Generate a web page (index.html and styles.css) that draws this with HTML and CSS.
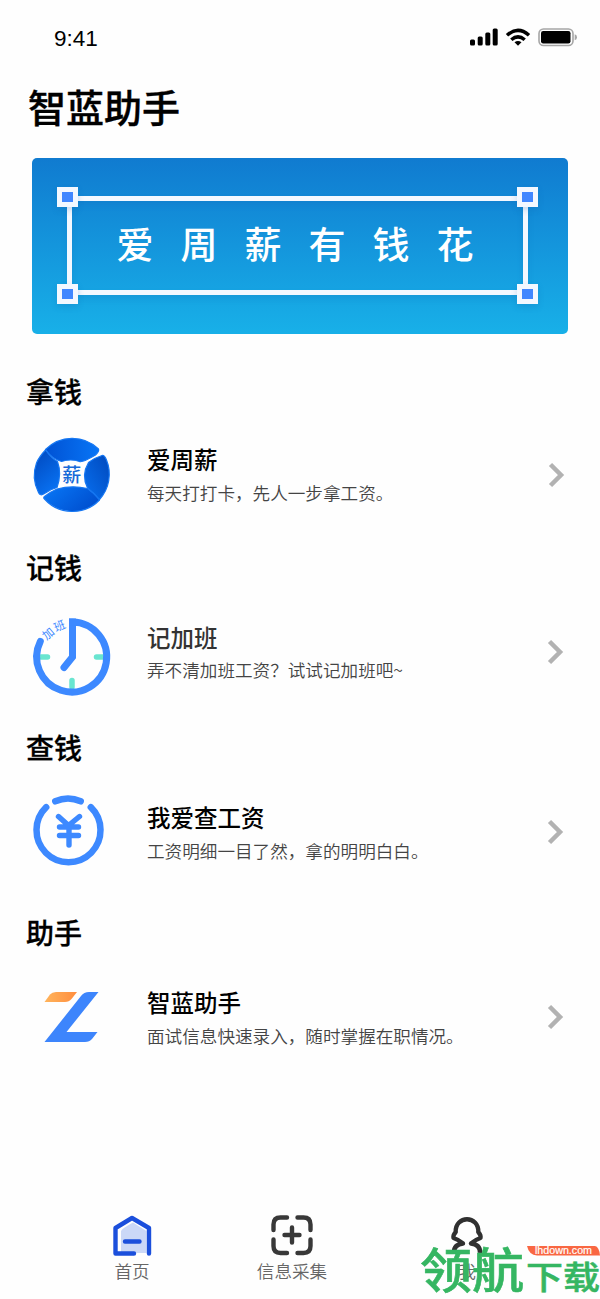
FILE: index.html
```html
<!DOCTYPE html>
<html lang="zh-CN">
<head>
<meta charset="utf-8">
<title>智蓝助手</title>
<link rel="stylesheet" href="styles.css">
</head>
<body>
<div class="screen">
  <header class="status">
    <span class="time">9:41</span>
    <svg class="status-icons" width="108" height="20" viewBox="0 0 108 20">
      <rect x="0" y="11.5" width="5" height="6" rx="1.5"/><rect x="7.7" y="8.5" width="5" height="9" rx="1.5"/><rect x="15.3" y="4.5" width="5" height="13" rx="1.5"/><rect x="22.7" y="0.5" width="5" height="17" rx="1.5"/>
      <g fill="none" stroke="#000" stroke-width="3.5"><path d="M37 7.2Q48-2.6 59 7.2M41.3 11.8Q48 6 54.7 11.8"/></g>
      <path d="M44.5 14.3Q48 11.5 51.5 14.3L48 17.8Z"/>
      <rect x="69" y="1" width="34" height="16.5" rx="4.5" fill="none" stroke="#a6a6a6" stroke-width="1.6"/>
      <rect x="71" y="3" width="29.5" height="12.5" rx="2.2"/>
      <path d="M104.7 6.3Q107 7 107 9.3T104.7 12.3Z" fill="#a6a6a6"/>
    </svg>
  </header>
  <h1 class="title">智蓝助手</h1>
  <div class="banner">
    <div class="frame">
      <span class="slogan">爱周薪有钱花</span>
      <i class="handle tl"></i><i class="handle tr"></i><i class="handle bl"></i><i class="handle br"></i>
    </div>
  </div>
  <main>
    <section class="group group-pay">
      <h2>拿钱</h2>
      <div class="item">
        <svg class="logo" width="90" height="90" viewBox="0 0 90 90">
          <defs>
            <linearGradient id="a" x1="0" y1="0" x2="1" y2="0"><stop offset="0" stop-color="#0052d4"/><stop offset="1" stop-color="#0875f6"/></linearGradient>
            <linearGradient id="b" x1="1" y1="0" x2="0" y2="1"><stop offset="0" stop-color="#0049bd"/><stop offset="1" stop-color="#0870f0"/></linearGradient>
            <linearGradient id="c" x1="0" y1="0" x2="1" y2=".5"><stop offset="0" stop-color="#0878f8"/><stop offset="1" stop-color="#0050d0"/></linearGradient>
            <linearGradient id="d" x1="0" y1="0" x2=".5" y2="1"><stop offset="0" stop-color="#0047bd"/><stop offset="1" stop-color="#0870f0"/></linearGradient>
          </defs>
          <g stroke="#1677f2" stroke-width="1.2" stroke-linejoin="round">
            <path d="M19.5 20Q13 27 10.500 33A37 37 0 0 0 12.500 62.500Q14 66.500 18.500 63.500Q25 59 31 57.500Q36 44 31.500 31.500Q26 29 19.500 20Z" fill="url(#d)"/>
            <path d="M19.500 19.500A37.500 37.500 0 0 1 72.500 19Q73.500 21.500 69.500 25Q56 33 53.500 31.500Q45 28.500 35.500 31.500Q26 29 19.500 19.500Z" fill="url(#a)"/>
            <path d="M76 25.500Q78.500 25 80.500 30A37.500 37.500 0 0 1 73.500 69.500Q68 63 61.500 58Q55 45 62.500 32.500Q68 28 76 25.500Z" fill="url(#b)"/>
            <path d="M18.500 69A37.500 37.500 0 0 0 73.500 70Q68 63 61.500 58.500Q46 55 31 59Q24 62 18.500 66.500Q17 67.500 18.500 69Z" fill="url(#c)"/>
          </g>
          <text x="45.700" y="52" text-anchor="middle" font-size="19" font-weight="500" fill="#1769d8">薪</text>
        </svg>
        <div class="copy"><h3>爱周薪</h3><p>每天打打卡，先人一步拿工资。</p></div>
        <svg class="chevron" width="18" height="28" viewBox="0 0 18 28"><path d="M3.500 3.500 14 14 3.500 24.500"/></svg>
      </div>
    </section>
    <section class="group group-hours">
      <h2>记钱</h2>
      <div class="item">
        <svg class="logo" width="90" height="90" viewBox="-1 -1 90 90">
          <g fill="none" stroke="#69e5d0" stroke-width="5.500"><path d="M14 45h6.500M76 45h-6.500M45 75v-6.500" stroke-linecap="round"/></g>
          <path d="M13.300 29.500A35 35 0 1 0 45.500 10V45L37 55.500" fill="none" stroke="#3d89ff" stroke-width="7" stroke-linecap="round" stroke-linejoin="miter"/>
          <path d="M42 6.500h7v7h-7z" fill="#3d89ff"/>
          <g fill="#3d89ff" font-size="11.500"><text transform="translate(19.500 28.500) rotate(-40)">加</text><text transform="translate(29 20) rotate(-24)">班</text></g>
        </svg>
        <div class="copy"><h3>记加班</h3><p>弄不清加班工资？试试记加班吧~</p></div>
        <svg class="chevron" width="18" height="28" viewBox="0 0 18 28"><path d="M3.500 3.500 14 14 3.500 24.500"/></svg>
      </div>
    </section>
    <section class="group group-salary">
      <h2>查钱</h2>
      <div class="item">
        <svg class="logo" width="90" height="90" viewBox="0 0 90 90">
          <g fill="none" stroke="#3d89ff" stroke-width="6.500" stroke-linecap="round" stroke-linejoin="round">
            <path d="M20.200 22.200A32 32 0 1 0 64.800 22.200M29.300 16.300Q42 10.500 54.700 16.300"/>
            <path stroke-width="5.400" d="M32.500 31.500 42.500 40.500 53.500 31.500M33.500 42h19M33.500 50.500h19M43 42v18"/>
          </g>
        </svg>
        <div class="copy"><h3>我爱查工资</h3><p>工资明细一目了然，拿的明明白白。</p></div>
        <svg class="chevron" width="18" height="28" viewBox="0 0 18 28"><path d="M3.500 3.500 14 14 3.500 24.500"/></svg>
      </div>
    </section>
    <section class="group group-helper">
      <h2>助手</h2>
      <div class="item">
        <svg class="logo" width="90" height="90" viewBox="0 0 90 90">
          <defs><linearGradient id="o"><stop offset="0" stop-color="#ffb45c"/><stop offset="1" stop-color="#ff8d3e"/></linearGradient></defs>
          <path d="M18.500 30 24 22.500Q26 20 30 20H51L45.500 27Q43 30 39 30Z" fill="url(#o)"/>
          <path d="M18.500 70 55 24Q58 20 63 20H72.500L40.500 60H71.500L66 67Q63.500 70 59 70Z" fill="#3d85fc"/>
        </svg>
        <div class="copy"><h3>智蓝助手</h3><p>面试信息快速录入，随时掌握在职情况。</p></div>
        <svg class="chevron" width="18" height="28" viewBox="0 0 18 28"><path d="M3.500 3.500 14 14 3.500 24.500"/></svg>
      </div>
    </section>
  </main>
  <nav class="tabs">
    <a class="tab"><svg width="48" height="48" viewBox="0 0 48 48">
      <path d="M13 20Q14 17.500 25 11.500L38.500 20V42H13Z" fill="#cbd8f7"/>
      <path d="M26 42.500H7.500V17L24 7 41 17V42.500M17 30.500H31.500" fill="none" stroke="#1b4fdc" stroke-width="4.400" stroke-linecap="round" stroke-linejoin="round"/></svg><span>首页</span></a>
    <a class="tab"><svg width="48" height="48" viewBox="0 0 48 48"><g fill="none" stroke="#383838" stroke-width="4.400" stroke-linecap="round"><path d="M5.500 19V13.500Q5.500 6.500 12.500 6.500H19M29.500 6.500H35.500Q42.500 6.500 42.500 13.500V19M42.500 28.500V35Q42.500 42 35.500 42H29.500M19 42H12.500Q5.500 42 5.500 35V28.500"/><path d="M24 16.500v15M16.500 24h15"/></g></svg><span>信息采集</span></a>
    <a class="tab"><svg width="48" height="48" viewBox="0 0 48 48"><path d="M11 42Q10.500 33.500 20 32.500Q15.500 28.500 10.500 27Q10 24 12.700 21C12 4 36 4 35.300 21Q38 24 37.500 27Q32.500 28.500 28 32.500Q37.500 33.500 37 42" fill="none" stroke="#303030" stroke-width="4.400" stroke-linejoin="round"/></svg><span>我</span></a>
  </nav>
  <svg class="watermark" width="180" height="59" viewBox="0 0 180 59">
    <g fill="#35b662" stroke="#35b662" stroke-width=".6" font-weight="500">
      <text transform="translate(0 47.500) scale(1.040 .960)" font-size="50">领航</text>
      <text transform="translate(106 48.500) scale(1 .870)" font-size="37">下载</text>
    </g>
    <path d="M107 6H175Q179 6.500 180 15.500H117Q109 15 107 6Z" fill="#f96742"/>
    <text class="domain" x="115" y="14.300" font-size="10.500" textLength="57" lengthAdjust="spacingAndGlyphs">lhdown.com</text>
  </svg>
</div>
</body>
</html>
```
FILE: styles.css
```css
* { box-sizing: border-box; }
body { margin: 0; background: #fefefe; color: #000; font-family: "Noto Sans CJK SC", sans-serif; }
h1, h2, h3, p { margin: 0; }
svg { display: block; }
.screen { position: relative; width: 600px; height: 1299px; overflow: hidden; display: flex; flex-direction: column; }
.status { height: 78px; padding: 24px 22px 0 54px; display: flex; justify-content: space-between; align-items: flex-start; }
.time { font: 22.5px/30px "Liberation Sans", sans-serif; }
.status-icons { margin-top: 4px; }
.title { height: 80px; padding-left: 28px; font-size: 38px; line-height: 56px; font-weight: 500; -webkit-text-stroke: .4px; }
.banner { height: 176px; margin: 0 32px; padding: 38px 40px 39px 35px; border-radius: 5px; background: linear-gradient(#107bd0, #18b0e8); }
.frame { position: relative; height: 99px; border: 5px solid #f3f8ff; display: flex; align-items: center; justify-content: center; box-shadow: 0 4px 6px #1460aa26, inset 0 4px 6px #1460aa26; }
.slogan { color: #fff; font-size: 37px; line-height: 50px; font-weight: 500; letter-spacing: 27px; margin: -6px -22px 0 0; }
.handle { position: absolute; width: 21px; height: 20px; border: 5px solid #f3f8ff; background: #4187ff; box-shadow: 0 3px 6px #1460aa33; }
.tl { left: -15px; top: -14px; }
.tr { right: -15px; top: -14px; }
.bl { left: -15px; bottom: -14px; }
.br { right: -15px; bottom: -14px; }
main { padding-top: 37px; height: 877px; flex-shrink: 0; }
.group { height: 180px; padding: 0 34px 0 26px; }
.group-pay { height: 176px; }
.group-salary { height: 185px; }
.group h2 { font-size: 28px; line-height: 40px; font-weight: 500; -webkit-text-stroke: .3px; }
.item { display: grid; grid-template-columns: 90px 1fr 18px; column-gap: 31px; align-items: start; padding-top: 19px; }
.group-pay .item { padding-top: 18px; }
.logo { margin-top: 1px; }
.group-hours .logo { margin-top: 5px; }
.group-salary .logo { margin-top: -1px; }
.copy { padding-top: 14px; }
.group-pay .copy { padding-top: 13px; }
.copy h3 { font-size: 23.5px; line-height: 34px; font-weight: 500; }
.copy p { font-size: 17.6px; line-height: 33px; font-weight: 350; color: #444; white-space: nowrap; }
.group-hours p { margin-top: -1px; }
.group-hours h3 { color: #333; }
.chevron { margin: 32px 0 0 -2px; }
.group-pay .chevron { margin-left: -1px; }
.chevron path { fill: none; stroke: #b2b2b2; stroke-width: 4.5; }
.tabs { height: 87px; padding: 0 53px 0 52px; display: grid; grid-template-columns: repeat(2, 160px) 190px; }
.tab { display: flex; flex-direction: column; align-items: center; font-size: 17.6px; line-height: 24px; font-weight: 350; color: #666; }
.watermark { position: absolute; left: 420px; bottom: 0; }
.domain { fill: #fff; font-family: "Liberation Sans", sans-serif; stroke: #fff; stroke-width: .2px; }
```
